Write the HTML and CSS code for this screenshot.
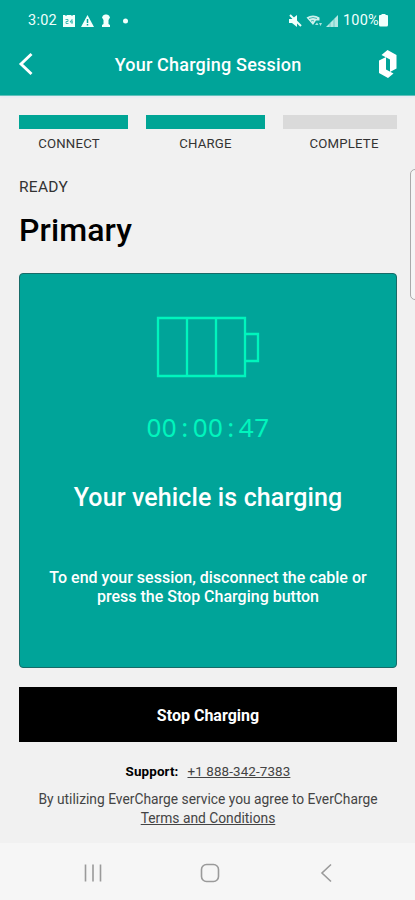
FILE: index.html
```html
<!DOCTYPE html>
<html lang="en">
<head>
<meta charset="utf-8">
<title>Your Charging Session</title>
<link rel="stylesheet" href="styles.css">
</head>
<body>
<div class="app">
  <div class="top">
    <div class="status">
      <span class="status-text time">3:02</span>
      <svg class="status-left" width="68" height="16" viewBox="0 0 68 16" fill="#f2fffc">
        <path d="M1 2h2l1 1 1-1h4l1 1 1-1h2v12H1z"/>
        <path d="M3.500 6.500h2.500v2H4v2h2.500M10 6.500L8 9h3M10 6.500v4.500" fill="none" stroke="#00a499" stroke-width=".7"/>
        <path d="M25.500 2L32 14H19z"/>
        <path d="M25.500 6v4M25.500 11v1.500" stroke="#00a499" stroke-width="1.500"/>
        <path d="M41 2.500l2-1h2l2 1 1 2-1.500 2.500v4l1.500 1v2h-8v-2l1.500-1V7L40 4.500z"/>
        <circle cx="63.500" cy="8" r="2.500"/>
      </svg>
      <svg class="status-right" width="52" height="16" viewBox="0 0 52 16" fill="#f2fffc">
        <path d="M1 6h3l5-4v12l-5-4H1z"/>
        <path d="M2 2l11 11" stroke="#f2fffc" stroke-width="2"/>
        <path d="M18.500 4.500q6.500-4 13 0v3H28L25 12z" opacity=".85"/>
        <path d="M21 5.500q4-2 8 0M23 8q2-1 3 0" fill="none" stroke="#00a499" stroke-width=".7"/>
        <path d="M27 12l2-2.500 1.500 2.500zM31 10h3l-1.500 3z" opacity=".7"/>
        <path d="M38 14L50 2v12z" opacity=".75"/>
        <path d="M42 10v4M46 6v8" stroke="#00a499" stroke-width=".4"/>
      </svg>
      <span class="status-text">100%</span>
      <svg class="battery" width="9" height="13" viewBox="0 0 9 13" fill="#f2fffc"><path d="M2.500 0h4v1H8q1 0 1 1v9q0 1.500-1.500 1.500h-6Q0 12.500 0 11V2q0-1 1-1h1.500z"/></svg>
    </div>
    <header class="header">
      <svg class="back" width="16" height="24" viewBox="0 0 16 24"><path d="M13.500 2L3 12l10.500 10" fill="none" stroke="#fff" stroke-width="2.900"/></svg>
      <h1>Your Charging Session</h1>
      <svg class="logo" width="20" height="28" viewBox="0 0 20 28" fill="#fff">
        <path d="M9.500 0L18.500 5v13.500L12 22V9.500L3.500 5z"/>
        <path d="M1 10.500L8 7v12.500l7.500 4L10 28 1 23z"/>
      </svg>
    </header>
  </div>
  <main>
    <div class="steps">
      <div class="step done"><i></i><span>CONNECT</span></div>
      <div class="step done"><i></i><span>CHARGE</span></div>
      <div class="step"><i></i><span>COMPLETE</span></div>
    </div>
    <p class="ready">READY</p>
    <h2>Primary</h2>
    <section class="card">
      <svg class="cells" width="104" height="62" viewBox="0 0 104 62" fill="none" stroke="#00f5bd" stroke-width="2.300"><path d="M2 2h87v58H2zM31 2v58M60 2v58M89 18h13v27H89"/></svg>
      <div class="timer">00<span>:</span>00<span>:</span>47</div>
      <h3>Your vehicle is charging</h3>
      <p>To end your session, disconnect the cable or<br>press the Stop Charging button</p>
    </section>
    <button>Stop Charging</button>
    <div class="support"><b>Support:</b><a>+1 888-342-7383</a></div>
    <p class="terms">By utilizing EverCharge service you agree to EverCharge<br><a>Terms and Conditions</a></p>
  </main>
  <nav>
    <svg width="20" height="20" viewBox="0 0 20 20"><path d="M2.500 1.500v17M10 1.500v17M17.500 1.500v17"/></svg>
    <svg width="20" height="20" viewBox="0 0 20 20"><rect x="1.500" y="1.500" width="17" height="17" rx="5"/></svg>
    <svg width="20" height="20" viewBox="0 0 20 20"><path d="M15 1.500L6 10l9 8.500"/></svg>
  </nav>
  <div class="edge"></div>
</div>
</body>
</html>
```
FILE: styles.css
```css
* { box-sizing: border-box; }
body { margin: 0; background: #f1f1f1; font-family: Roboto, "Liberation Sans", sans-serif; color: #000; }
h1, h2, h3, p { margin: 0; font-weight: 500; }
.app { position: relative; width: 415px; height: 900px; overflow: hidden; display: flex; flex-direction: column; }
.top { height: 96px; flex: none; background: #00a499; color: #fff; border-bottom: 1px solid #60c0ba; box-shadow: 0 1px 3px #dfe8f5; }
.status { height: 40px; display: flex; align-items: center; padding: 1px 27px 0 28px; }
.status-text { font-size: 14.5px; letter-spacing: .25px; color: #effffc; white-space: nowrap; }
.status-left { margin-left: 5px; }
.status-right { margin-left: auto; margin-right: 3px; }
.battery { margin-left: 0; }
.header { height: 48px; display: flex; align-items: center; justify-content: space-between; padding: 0 17px 0 18px; }
h1 { padding: 1px 0 0 4px; font-size: 18px; line-height: 24px; letter-spacing: .2px; white-space: nowrap; }
main { flex: 1; padding: 19px 18px 0 19px; }
.steps { display: grid; grid-template-columns: 109px 119px 114px; gap: 18px; }
.step { text-align: center; font-size: 13.2px; line-height: 16px; letter-spacing: .2px; color: #333; }
.step i { display: block; height: 14px; background: #dadada; margin-bottom: 7px; }
.step:nth-child(1) span { margin-left: -9px; }
.step:last-child span { margin-left: 8px; }
.done i { background: #00a595; }
.ready { margin-top: 25px; font-size: 15.5px; line-height: 20px; letter-spacing: .3px; font-weight: 400; color: #333; }
h2 { margin-top: 14px; font-size: 32px; line-height: 38px; letter-spacing: .1px; }
.card { margin-top: 24px; height: 395px; border: 1px solid #176b68; border-radius: 4px; background: #00a499; color: #fff; display: flex; flex-direction: column; align-items: center; text-align: center; padding-top: 42px; }
.timer { margin-top: 32px; font: 26px/34px "Noto Sans", Roboto, sans-serif; letter-spacing: .5px; color: #00f5bd; }
.timer span { display: inline-block; width: 15.4px; }
h3 { margin-top: 38px; font-size: 25px; line-height: 32px; letter-spacing: .12px; white-space: nowrap; }
.card p { margin-top: 54px; font-size: 16px; line-height: 19px; white-space: nowrap; }
button { display: block; width: 100%; height: 55px; margin-top: 19px; padding: 2px 0 0; border: 0; background: #000; color: #fff; font: 700 16px Roboto, sans-serif; }
.support { margin-top: 21px; display: flex; justify-content: center; gap: 9px; font-size: 13.4px; line-height: 18px; letter-spacing: .12px; }
a { color: #444; text-decoration: underline; }
.terms { margin-top: 9px; text-align: center; font-size: 13.8px; line-height: 18.5px; font-weight: 400; color: #444; white-space: nowrap; }
nav { height: 57px; flex: none; background: #f6f6f6; display: grid; grid-template-columns: repeat(3, 116.5px); justify-content: center; justify-items: center; align-items: center; padding: 2px 0 0 4px; }
nav svg { fill: none; stroke: #9a9a9a; stroke-width: 1.6; }
.edge { position: absolute; left: 410px; top: 169px; width: 12px; height: 131px; border: 1px solid #aaa; border-radius: 5px; background: #f5f5f5; }
```
